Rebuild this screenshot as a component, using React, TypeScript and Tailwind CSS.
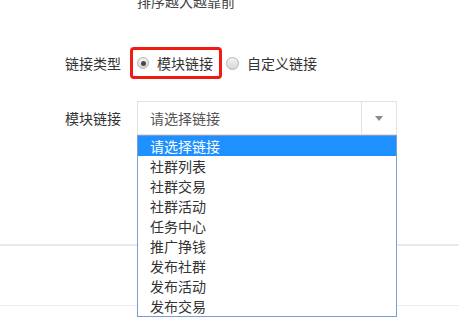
import React, { useState } from "react";

const options = [
  "请选择链接",
  "社群列表",
  "社群交易",
  "社群活动",
  "任务中心",
  "推广挣钱",
  "发布社群",
  "发布活动",
  "发布交易",
];

const Radio = ({ checked, size }: { checked: boolean; size: string }) => (
  <span
    className={`${size} flex shrink-0 items-center justify-center rounded-full border border-[#b4b4b4] bg-gradient-to-b from-[#f4f4f4] to-[#d6d6d6]`}
  >
    {checked && <span className="h-[5px] w-[5px] rounded-full bg-[#4a4a4a]" />}
  </span>
);

const App: React.FC = () => {
  const [linkType, setLinkType] = useState<string>("module");
  const [active] = useState<number>(0);

  return (
    <div className="h-[329px] w-[459px] overflow-hidden bg-white font-['Noto_Sans_CJK_SC',sans-serif] text-[14px] text-[#333]">
      <div className="-mt-[9px] pl-[137px] leading-[20px] text-[#444]">
        排序越大越靠前
      </div>

      <div className="mt-[36px] flex h-[32px] items-center">
        <div className="w-[121px] text-right">链接类型</div>
        <label
          className="ml-[9px] flex h-[32px] items-center rounded-[4px] border-[3px] border-[#ee1c12] pl-[4px] pr-[6px]"
          onClick={() => setLinkType("module")}
        >
          <Radio checked={linkType === "module"} size="h-[12px] w-[12px]" />
          <span className="ml-[8px]">模块链接</span>
        </label>
        <label
          className="ml-[4px] flex items-center"
          onClick={() => setLinkType("custom")}
        >
          <Radio checked={linkType === "custom"} size="h-[13px] w-[13px]" />
          <span className="ml-[8px]">自定义链接</span>
        </label>
      </div>

      <div className="mt-[22px] flex items-center">
        <div className="w-[121px] text-right">模块链接</div>
        <div className="relative ml-[16px] w-[260px]">
          <div className="flex h-[34px] items-stretch border border-[#e2e2e2] bg-white">
            <div className="flex flex-1 items-center pl-[12px] text-[#555]">
              {options[active]}
            </div>
            <div className="flex w-[35px] items-center justify-center border-l border-[#e2e2e2]">
              <span className="h-0 w-0 border-x-[4px] border-t-[5px] border-x-transparent border-t-[#8a8a8a]" />
            </div>
          </div>
          <ul className="absolute left-0 top-full z-10 w-[260px] border border-[#7b9dd4] bg-white">
            {options.map((o, i) => (
              <li
                key={o}
                className={`h-[20px] pl-[12px] leading-[20px] ${
                  i === active ? "bg-[#1e90ff] text-white" : "text-[#333]"
                }`}
              >
                {o}
              </li>
            ))}
          </ul>
        </div>
      </div>

      <div className="mt-[109px] h-[61px] border-t-2 border-[#e8e8e8]" />
      <div className="border-t border-[#ececec]" />
    </div>
  );
};

export default App;
